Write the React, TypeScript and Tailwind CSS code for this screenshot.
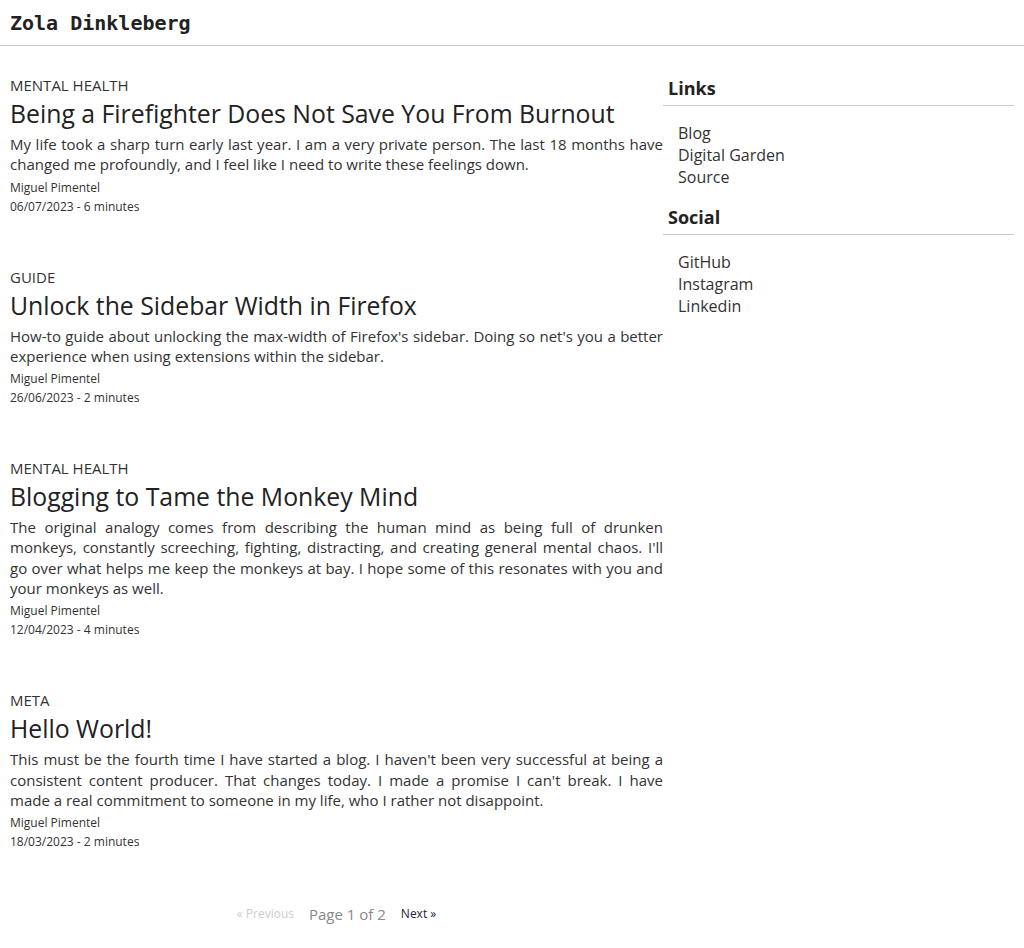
const posts = [
  {
    category: 'Mental Health',
    title: 'Being a Firefighter Does Not Save You From Burnout',
    desc: 'My life took a sharp turn early last year. I am a very private person. The last 18 months have changed me profoundly, and I feel like I need to write these feelings down.',
    author: 'Miguel Pimentel',
    meta: '06/07/2023 - 6 minutes',
  },
  {
    category: 'Guide',
    title: 'Unlock the Sidebar Width in Firefox',
    desc: "How-to guide about unlocking the max-width of Firefox's sidebar. Doing so net's you a better experience when using extensions within the sidebar.",
    author: 'Miguel Pimentel',
    meta: '26/06/2023 - 2 minutes',
  },
  {
    category: 'Mental Health',
    title: 'Blogging to Tame the Monkey Mind',
    desc: "The original analogy comes from describing the human mind as being full of drunken monkeys, constantly screeching, fighting, distracting, and creating general mental chaos. I'll go over what helps me keep the monkeys at bay. I hope some of this resonates with you and your monkeys as well.",
    author: 'Miguel Pimentel',
    meta: '12/04/2023 - 4 minutes',
  },
  {
    category: 'Meta',
    title: 'Hello World!',
    desc: "This must be the fourth time I have started a blog. I haven't been very successful at being a consistent content producer. That changes today. I made a promise I can't break. I have made a real commitment to someone in my life, who I rather not disappoint.",
    author: 'Miguel Pimentel',
    meta: '18/03/2023 - 2 minutes',
  },
]

const sidebar = [
  { title: 'Links', items: ['Blog', 'Digital Garden', 'Source'] },
  { title: 'Social', items: ['GitHub', 'Instagram', 'Linkedin'] },
]

export default function App() {
  return (
    <div className="min-h-screen bg-white text-[#333] font-['Open_Sans',sans-serif]">
      {/* Header */}
      <header className="h-[46px] border-b border-[#cccccc] px-[10px] flex items-center">
        <a className="font-['DejaVu_Sans_Mono',monospace] font-bold text-[20px] text-[#222]">
          Zola Dinkleberg
        </a>
      </header>

      <div className="flex px-[10px]">
        <main className="w-[653px] pt-[29px]">
          {posts.map((p) => (
            <article key={p.title} className="mb-[51px]">
              <p className="uppercase text-[15px] leading-5">{p.category}</p>
              <h2 className="text-[24.8px] leading-8 mt-[2px] text-[#222]">{p.title}</h2>
              <p className="text-[15px] leading-[20.3px] mt-[5px] text-justify">{p.desc}</p>
              <p className="text-[12px] leading-[18px] mt-[4px]">{p.author}</p>
              <p className="text-[12px] leading-[18px] mt-px">{p.meta}</p>
            </article>
          ))}

          <nav className="flex items-center justify-center gap-[15px] h-6 mt-[2px]">
            <span className="text-[12px] text-[#cccccc]">« Previous</span>
            <span className="text-[15px] text-[#888]">Page 1 of 2</span>
            <a className="text-[12px] text-[#1a2340]">Next »</a>
          </nav>
        </main>

        <aside className="flex-1 pt-[30px]">
          {sidebar.map((s) => (
            <section key={s.title} className="mb-[17px]">
              <h3 className="font-bold text-[18px] leading-6 px-[5px] pb-[5px] border-b border-[#cccccc] text-[#222]">
                {s.title}
              </h3>
              <ul className="mt-[16px] pl-[15px]">
                {s.items.map((item) => (
                  <li key={item} className="text-[16px] leading-[22px]">
                    <a>{item}</a>
                  </li>
                ))}
              </ul>
            </section>
          ))}
        </aside>
      </div>
    </div>
  )
}
